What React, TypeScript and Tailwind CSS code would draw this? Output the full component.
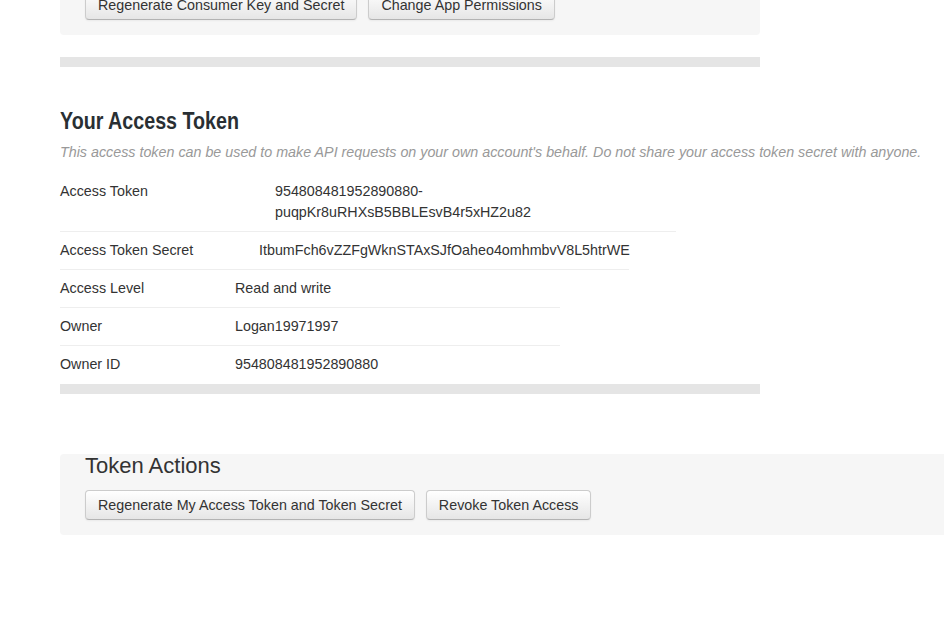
import React from "react";

const btn =
  "inline-block px-3 py-1 text-[14.3px] leading-[20px] text-[#333] rounded-[4px] border border-[#cccccc] border-b-[#b3b3b3] bg-gradient-to-b from-white to-[#e6e6e6] shadow-[inset_0_1px_0_rgba(255,255,255,0.2),0_1px_2px_rgba(0,0,0,0.05)] whitespace-nowrap";

function Row({
  label,
  value,
  width,
  labelW,
  last,
}: {
  label: string;
  value: React.ReactNode;
  width: string;
  labelW: string;
  last?: boolean;
}) {
  return (
    <div
      className={`flex pt-[8px] pb-[8px] leading-[21px] text-[14.3px] text-[#333] ${width} ${
        last ? "" : "border-b border-[#eeeeee]"
      }`}
    >
      <div className={`${labelW} shrink-0`}>{label}</div>
      <div className="flex-1 whitespace-nowrap">{value}</div>
    </div>
  );
}

export default function App() {
  return (
    <div
      className="w-[944px] h-[644px] overflow-hidden bg-white"
      style={{ fontFamily: '"Liberation Sans", Arial, sans-serif' }}
    >
      <div className="pl-[60px]">
        {/* top panel */}
        <div className="w-[700px] bg-[#f6f6f6] rounded-b-[4px] pl-[25px] pb-[15px] -mt-[10px] flex gap-[11px]">
          <span className={btn}>Regenerate Consumer Key and Secret</span>
          <span className={btn}>Change App Permissions</span>
        </div>
        <div className="w-[700px] h-[10px] bg-[#e5e5e5] mt-[22px]" />

        <h2 className="mt-[39px] text-[24px] leading-[30px] font-bold text-[#292f33] scale-x-[0.82] origin-left whitespace-nowrap">
          Your Access Token
        </h2>
        <p className="mt-[6px] text-[14.3px] leading-[20px] italic text-[#999] whitespace-nowrap">
          This access token can be used to make API requests on your own account's behalf. Do not share your
          access token secret with anyone.
        </p>

        <div className="mt-[11px]">
          <Row
            label="Access Token"
            labelW="w-[215px]"
            width="w-[616px]"
            value={
              <>
                954808481952890880-
                <br />
                puqpKr8uRHXsB5BBLEsvB4r5xHZ2u82
              </>
            }
          />
          <Row
            label="Access Token Secret"
            labelW="w-[199px]"
            width="w-[569px]"
            value="ItbumFch6vZZFgWknSTAxSJfOaheo4omhmbvV8L5htrWE"
          />
          <Row label="Access Level" labelW="w-[175px]" width="w-[500px]" value="Read and write" />
          <Row label="Owner" labelW="w-[175px]" width="w-[500px]" value="Logan19971997" />
          <Row label="Owner ID" labelW="w-[175px]" width="w-[500px]" value="954808481952890880" last />
        </div>
        <div className="w-[700px] h-[10px] bg-[#e5e5e5] mt-[1px]" />

        <div className="mt-[60px] bg-[#f6f6f6] rounded-l-[4px] pl-[25px] pb-[15px]">
          <div className="text-[22px] leading-[24px] text-[#333]">Token Actions</div>
          <div className="mt-[12px] flex gap-[11px]">
            <span className={btn}>Regenerate My Access Token and Token Secret</span>
            <span className={btn}>Revoke Token Access</span>
          </div>
        </div>
      </div>
    </div>
  );
}
